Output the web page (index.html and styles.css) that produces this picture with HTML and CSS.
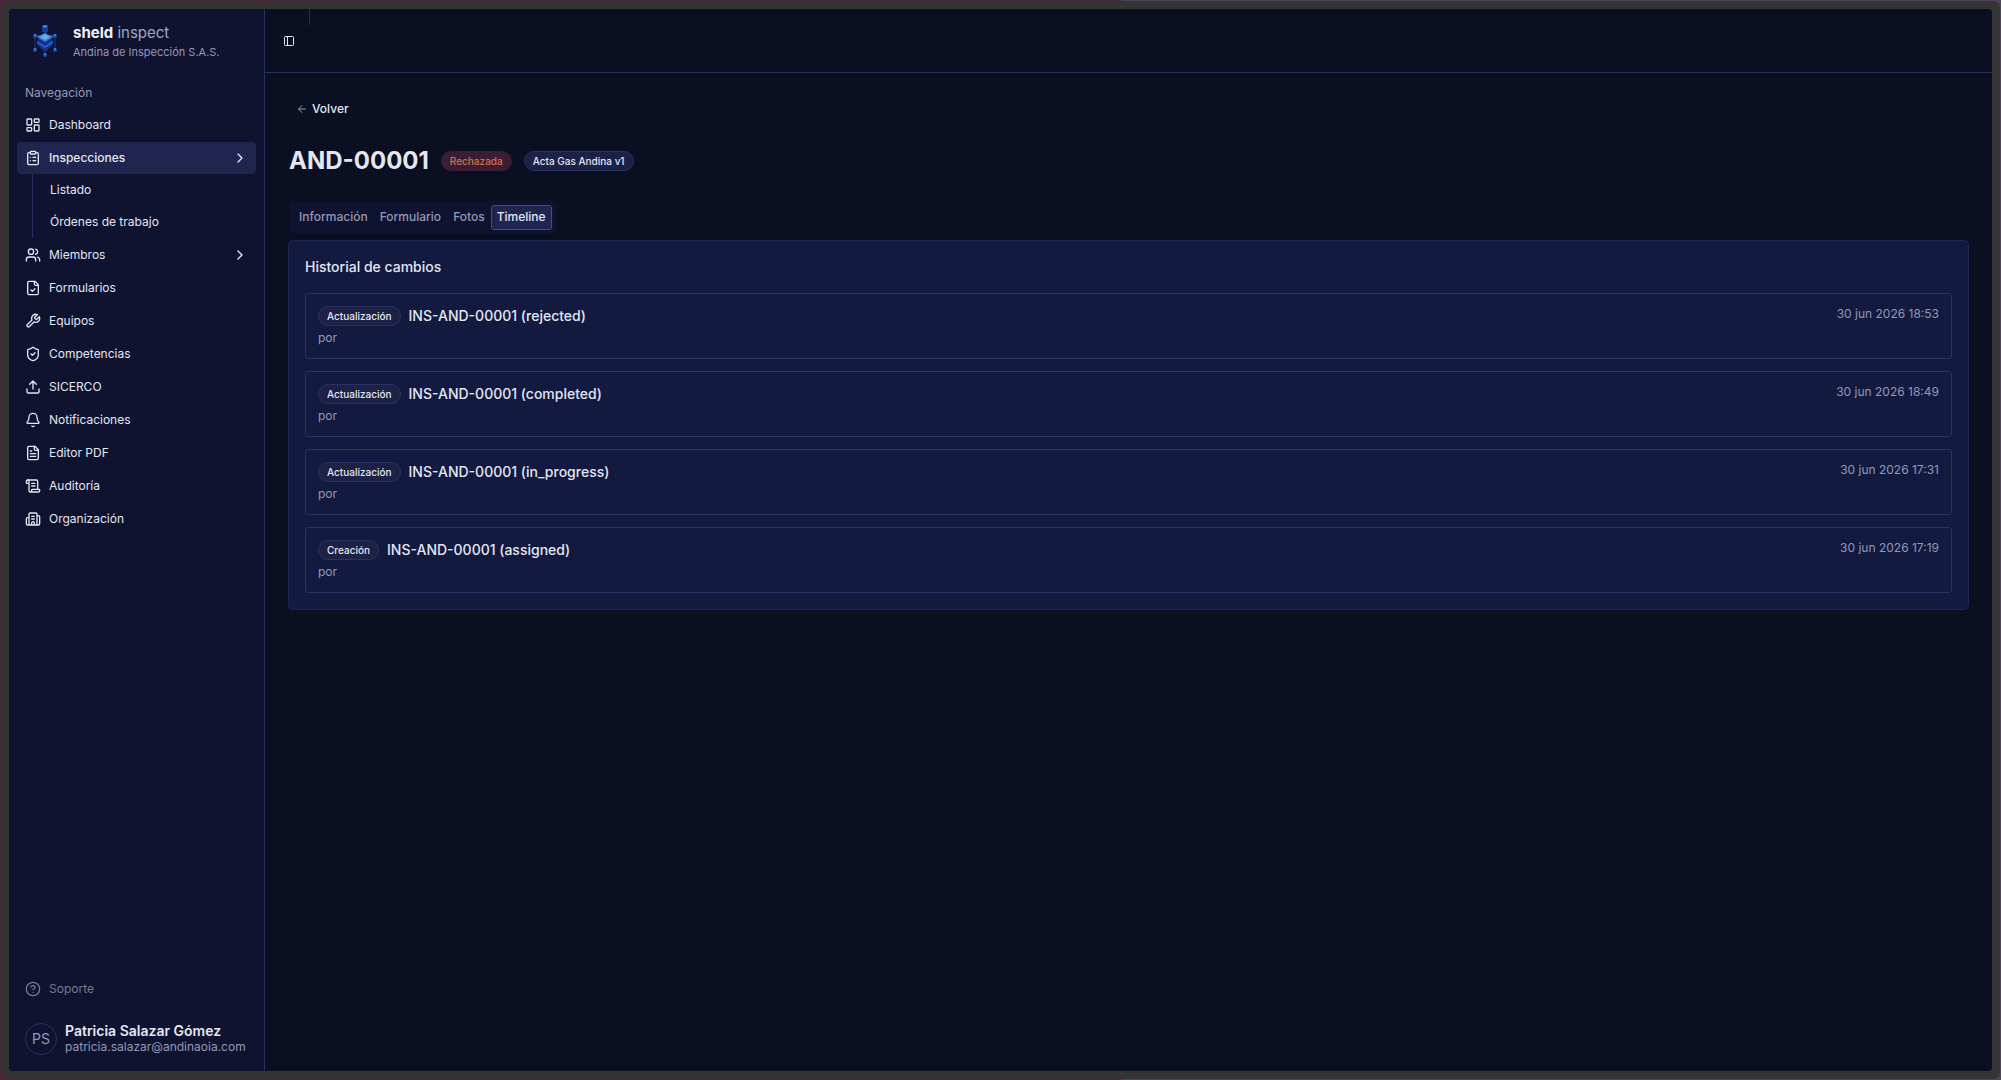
FILE: index.html
```html
<!DOCTYPE html>
<html lang="es">
<head>
  <meta charset="UTF-8" />
  <meta name="viewport" content="width=device-width, initial-scale=1.0"/>
  <title>AND-00001 - sheld inspect</title>
  <link rel="stylesheet" href="styles.css">
</head>
<body>

  <div class="frame">
    <div class="app">

      <aside class="sidebar">
        <a class="brand" href="#">
          <svg class="brand-logo" viewBox="-1 2 32 38" aria-hidden="true">
            <path d="M15 11v7M5 16v14M25 16v14M15 28v6" stroke="#1a3690" stroke-width="1"/>
            <path d="M4 15h22" stroke="#1f479f" stroke-width="2"/>
            <path d="M12 5l3-1 3 1v6l-3 1-3-1z" fill="#183a92"/>
            <path d="M12 5l3-1 3 1-3 2z" fill="#3f8fe0"/>
            <path d="M8 16l7-4 7 4 1 8-8 7-8-7z" fill="#142f8c"/>
            <path d="M7 20l8 5 8-5v2l-8 5-8-5z" fill="#2762cc"/>
            <path d="M7 16l8-4 8 4-8 5z" fill="#3a7fd0"/>
            <path d="M10 16l5-3 5 3-5 3z" fill="#62b0e6"/>
            <g fill="#1f49b0">
              <circle cx="5" cy="15" r="2"/><circle cx="25" cy="15" r="2"/>
              <circle cx="5" cy="29" r="2"/><circle cx="25" cy="29" r="2"/>
              <circle cx="15" cy="34" r="2"/>
            </g>
            <g fill="#4b8fe6">
              <circle cx="5" cy="28" r="1"/><circle cx="25" cy="28" r="1"/><circle cx="15" cy="33" r="1"/>
              <circle cx="5" cy="14" r="1"/><circle cx="25" cy="14" r="1"/>
            </g>
          </svg>
          <span class="brand-text">
            <span class="brand-name"><strong>sheld</strong> inspect</span>
            <span class="brand-org">Andina de Inspección S.A.S.</span>
          </span>
        </a>

        <nav class="nav">
          <div class="nav-label">Navegación</div>
          <ul class="nav-list">
            <li>
              <a class="nav-item" href="#">
                <svg class="icon" viewBox="0 0 24 24"><rect width="7" height="9" x="3" y="3" rx="1"/><rect width="7" height="5" x="14" y="3" rx="1"/><rect width="7" height="9" x="14" y="12" rx="1"/><rect width="7" height="5" x="3" y="16" rx="1"/></svg>
                <span>Dashboard</span>
              </a>
            </li>
            <li class="nav-group">
              <a class="nav-item active" href="#">
                <svg class="icon" viewBox="0 0 24 24"><rect width="8" height="4" x="8" y="2" rx="1"/><path d="M16 4h2a2 2 0 0 1 2 2v14a2 2 0 0 1-2 2H6a2 2 0 0 1-2-2V6a2 2 0 0 1 2-2h2M12 11h4M12 16h4M8 11h.01M8 16h.01"/></svg>
                <span>Inspecciones</span>
                <svg class="icon chevron" viewBox="0 0 24 24"><path d="m9 18 6-6-6-6"/></svg>
              </a>
              <ul class="nav-sub">
                <li><a href="#">Listado</a></li>
                <li><a href="#">Órdenes de trabajo</a></li>
              </ul>
            </li>
            <li>
              <a class="nav-item" href="#">
                <svg class="icon" viewBox="0 0 24 24"><path d="M16 21v-2a4 4 0 0 0-4-4H6a4 4 0 0 0-4 4v2"/><circle cx="9" cy="7" r="4"/><path d="M22 21v-2a4 4 0 0 0-3-3.870M16 3.130a4 4 0 0 1 0 7.750"/></svg>
                <span>Miembros</span>
                <svg class="icon chevron" viewBox="0 0 24 24"><path d="m9 18 6-6-6-6"/></svg>
              </a>
            </li>
            <li>
              <a class="nav-item" href="#">
                <svg class="icon" viewBox="0 0 24 24"><path d="M15 2H6a2 2 0 0 0-2 2v16a2 2 0 0 0 2 2h12a2 2 0 0 0 2-2V7Z"/><path d="M14 2v4a2 2 0 0 0 2 2h4M9 15l2 2 4-4"/></svg>
                <span>Formularios</span>
              </a>
            </li>
            <li>
              <a class="nav-item" href="#">
                <svg class="icon" viewBox="0 0 24 24"><path d="M14.700 6.300a1 1 0 0 0 0 1.400l1.600 1.600a1 1 0 0 0 1.400 0l3.770-3.770a6 6 0 0 1-7.940 7.940l-6.910 6.910a2.120 2.120 0 0 1-3-3l6.910-6.910a6 6 0 0 1 7.940-7.940l-3.760 3.760z"/></svg>
                <span>Equipos</span>
              </a>
            </li>
            <li>
              <a class="nav-item" href="#">
                <svg class="icon" viewBox="0 0 24 24"><path d="M20 13c0 5-3.500 7.500-7.660 8.950a1 1 0 0 1-.67-.01C7.500 20.500 4 18 4 13V6a1 1 0 0 1 1-1c2 0 4.500-1.200 6.240-2.720a1.170 1.170 0 0 1 1.520 0C14.510 3.810 17 5 19 5a1 1 0 0 1 1 1z"/><path d="m9 12 2 2 4-4"/></svg>
                <span>Competencias</span>
              </a>
            </li>
            <li>
              <a class="nav-item" href="#">
                <svg class="icon" viewBox="0 0 24 24"><path d="M21 15v4a2 2 0 0 1-2 2H5a2 2 0 0 1-2-2v-4M17 8l-5-5-5 5M12 3v12"/></svg>
                <span>SICERCO</span>
              </a>
            </li>
            <li>
              <a class="nav-item" href="#">
                <svg class="icon" viewBox="0 0 24 24"><path d="M10.268 21a2 2 0 0 0 3.464 0M3.262 15.326A1 1 0 0 0 4 17h16a1 1 0 0 0 .740-1.673C19.410 13.956 18 12.499 18 8A6 6 0 0 0 6 8c0 4.499-1.411 5.956-2.738 7.326"/></svg>
                <span>Notificaciones</span>
              </a>
            </li>
            <li>
              <a class="nav-item" href="#">
                <svg class="icon" viewBox="0 0 24 24"><path d="M15 2H6a2 2 0 0 0-2 2v16a2 2 0 0 0 2 2h12a2 2 0 0 0 2-2V7Z"/><path d="M14 2v4a2 2 0 0 0 2 2h4M10 9H8M16 13H8M16 17H8"/></svg>
                <span>Editor PDF</span>
              </a>
            </li>
            <li>
              <a class="nav-item" href="#">
                <svg class="icon" viewBox="0 0 24 24"><path d="M15 12h-5M15 8h-5M19 17V5a2 2 0 0 0-2-2H4"/><path d="M8 21h12a2 2 0 0 0 2-2v-1a1 1 0 0 0-1-1H11a1 1 0 0 0-1 1v1a2 2 0 1 1-4 0V5a2 2 0 1 0-4 0v2a1 1 0 0 0 1 1h3"/></svg>
                <span>Auditoría</span>
              </a>
            </li>
            <li>
              <a class="nav-item" href="#">
                <svg class="icon" viewBox="0 0 24 24"><path d="M10 12h4M10 8h4M14 21v-3a2 2 0 0 0-4 0v3M6 10H4a2 2 0 0 0-2 2v7a2 2 0 0 0 2 2h16a2 2 0 0 0 2-2V9a2 2 0 0 0-2-2h-2M6 21V5a2 2 0 0 1 2-2h8a2 2 0 0 1 2 2v16"/></svg>
                <span>Organización</span>
              </a>
            </li>
          </ul>
        </nav>

        <div class="sidebar-bottom">
          <a class="nav-item support" href="#">
            <svg class="icon" viewBox="0 0 24 24"><circle cx="12" cy="12" r="10"/><path d="M9.090 9a3 3 0 0 1 5.830 1c0 2-3 3-3 3M12 17h.01"/></svg>
            <span>Soporte</span>
          </a>
          <button class="user" type="button">
            <span class="avatar">PS</span>
            <span class="user-text">
              <span class="user-name">Patricia Salazar Gómez</span>
              <span class="user-email">patricia.salazar@andinaoia.com</span>
            </span>
          </button>
        </div>
      </aside>

      <div class="content">
        <header class="topbar">
          <button class="toggle" type="button" aria-label="Menú">
            <svg class="icon icon-sm" viewBox="0 0 24 24"><rect width="18" height="18" x="3" y="3" rx="2"/><path d="M9 3v18"/></svg>
          </button>
          <div class="divider"></div>
        </header>

        <main class="page">
          <a class="back" href="#">
            <svg class="icon icon-sm" viewBox="0 0 24 24"><path d="m12 19-7-7 7-7M19 12H5"/></svg>
            <span>Volver</span>
          </a>

          <div class="title-row">
            <h1>AND-00001</h1>
            <span class="badge badge-rejected">Rechazada</span>
            <span class="badge">Acta Gas Andina v1</span>
          </div>

          <div class="tabs" role="tablist">
            <button class="tab" type="button" role="tab">Información</button>
            <button class="tab" type="button" role="tab">Formulario</button>
            <button class="tab" type="button" role="tab">Fotos</button>
            <button class="tab selected" type="button" role="tab" aria-selected="true">Timeline</button>
          </div>

          <section class="card">
            <h2>Historial de cambios</h2>
            <ul class="timeline">
              <li class="entry">
                <div>
                  <div class="entry-title"><span class="badge">Actualización</span><span>INS-AND-00001 (rejected)</span></div>
                  <p class="entry-by">por</p>
                </div>
                <time class="entry-date">30 jun 2026 18:53</time>
              </li>
              <li class="entry">
                <div>
                  <div class="entry-title"><span class="badge">Actualización</span><span>INS-AND-00001 (completed)</span></div>
                  <p class="entry-by">por</p>
                </div>
                <time class="entry-date">30 jun 2026 18:49</time>
              </li>
              <li class="entry">
                <div>
                  <div class="entry-title"><span class="badge">Actualización</span><span>INS-AND-00001 (in_progress)</span></div>
                  <p class="entry-by">por</p>
                </div>
                <time class="entry-date">30 jun 2026 17:31</time>
              </li>
              <li class="entry">
                <div>
                  <div class="entry-title"><span class="badge">Creación</span><span>INS-AND-00001 (assigned)</span></div>
                  <p class="entry-by">por</p>
                </div>
                <time class="entry-date">30 jun 2026 17:19</time>
              </li>
            </ul>
          </section>
        </main>
      </div>

    </div>
  </div>

</body>
</html>
```
FILE: styles.css
```css
* {
  box-sizing: border-box;
  margin: 0;
  padding: 0;
}

body {
  font-family: Inter, "Liberation Sans", sans-serif;
  font-size: 12px;
  line-height: 16px;
  color: #e4e6f1;
  background: linear-gradient(to right, #4b2438 56%, #4a4658 56%);
}

ul {
  list-style: none;
}

a {
  color: inherit;
  text-decoration: none;
}

button {
  font: inherit;
  color: inherit;
  background: none;
  border: none;
  text-align: left;
}

.frame {
  min-height: 100vh;
  display: flex;
  padding: 8px;
  border: 1px solid transparent;
  border-radius: 8px;
  background-color: #343434;
  background-clip: padding-box;
}

.app {
  flex: 1;
  display: flex;
  border-radius: 4px;
  overflow: hidden;
  background-color: #0a0f21;
}

.icon {
  width: 16px;
  height: 16px;
  flex-shrink: 0;
  fill: none;
  stroke: currentColor;
  stroke-width: 2;
  stroke-linecap: round;
  stroke-linejoin: round;
}

.icon-sm {
  width: 12px;
  height: 12px;
}

/* sidebar */
.sidebar {
  width: 256px;
  flex-shrink: 0;
  display: flex;
  flex-direction: column;
  padding: 8px;
  background-color: #0f1330;
  border-right: 1px solid #27305f;
}

.brand {
  display: flex;
  align-items: center;
  gap: 12px;
  height: 50px;
  padding: 0 12px;
}

.brand-logo {
  width: 32px;
  height: 38px;
}

.brand-text,
.user-text {
  display: flex;
  flex-direction: column;
}

.brand-name {
  font-size: 15px;
  line-height: 20px;
  color: #a3a6c2;
}

.brand-name strong {
  font-weight: 700;
  color: #f0f2fa;
}

.brand-org {
  font-size: 11px;
  line-height: 18px;
  color: #9598b5;
}

.nav {
  padding-top: 10px;
}

.nav-label {
  height: 32px;
  padding: 0 8px;
  line-height: 32px;
  color: #9699b4;
}

.nav-list {
  display: flex;
  flex-direction: column;
  gap: 1px;
}

.nav-item {
  display: flex;
  align-items: center;
  gap: 8px;
  height: 32px;
  padding: 0 8px;
  border-radius: 4px;
}

.nav-item.active {
  font-weight: 500;
  background-color: #20254f;
}

.chevron {
  margin-left: auto;
}

.nav-sub {
  margin-left: 15px;
  padding-left: 17px;
  border-left: 1px solid #27305f;
}

.nav-sub a {
  display: block;
  line-height: 32px;
}

.sidebar-bottom {
  margin-top: auto;
}

.support {
  color: #76798f;
}

.user {
  display: flex;
  align-items: center;
  gap: 8px;
  width: 100%;
  margin-top: 10px;
  padding: 8px;
}

.avatar {
  width: 32px;
  height: 32px;
  border: 1px solid #27305f;
  border-radius: 50%;
  font-size: 14px;
  line-height: 30px;
  text-align: center;
  color: #9598b5;
}

.user-name {
  font-size: 14px;
  font-weight: 600;
  line-height: 16px;
}

.user-email {
  color: #9598b5;
}

/* content */
.content {
  flex: 1;
}

.topbar {
  display: flex;
  height: 64px;
  padding: 0 12px;
  border-bottom: 1px solid #27305f;
}

.toggle {
  display: flex;
  align-items: center;
  justify-content: center;
  width: 24px;
  height: 64px;
}

.divider {
  width: 1px;
  height: 16px;
  margin-left: 8px;
  background-color: #27305f;
}

.page {
  display: flex;
  flex-direction: column;
  align-items: flex-start;
  padding: 24px;
}

.back {
  display: flex;
  align-items: center;
  gap: 4px;
  height: 24px;
  padding: 0 7px;
  font-weight: 500;
}

.back .icon {
  color: #9598b5;
}

.title-row {
  display: flex;
  align-items: center;
  gap: 12px;
  margin-top: 24px;
}

h1 {
  font-size: 24px;
  font-weight: 700;
  line-height: 32px;
}

.badge {
  height: 20px;
  padding: 0 8px;
  border: 1px solid #2a3163;
  border-radius: 10px;
  font-size: 10px;
  font-weight: 500;
  line-height: 18px;
  background-color: #1c2145;
}

.badge-rejected {
  color: #d0704f;
  border-color: #3b1e33;
  background-color: #3b1e33;
}

.tabs {
  display: flex;
  align-items: center;
  height: 32px;
  margin-top: 24px;
  padding: 4px;
  border-radius: 4px;
  background-color: #0f1330;
}

.tab {
  height: 25px;
  padding: 0 5px;
  border: 1px solid transparent;
  border-radius: 3px;
  font-weight: 500;
  color: #9598b5;
}

.tab.selected {
  color: #e4e6f1;
  border-color: #454c80;
  background-color: #1f2450;
}

.card {
  align-self: stretch;
  margin-top: 8px;
  padding: 16px;
  border-radius: 4px;
  background-color: #131a40;
  box-shadow: 0 0 0 1px #22264a;
}

h2 {
  font-size: 14px;
  font-weight: 500;
  line-height: 20px;
}

.timeline {
  display: flex;
  flex-direction: column;
  gap: 12px;
  margin-top: 16px;
}

.entry {
  display: flex;
  justify-content: space-between;
  min-height: 66px;
  padding: 12px;
  border: 1px solid #2a3163;
  border-radius: 3px;
}

.entry-title {
  display: flex;
  align-items: center;
  gap: 8px;
  font-size: 14px;
  font-weight: 500;
  line-height: 20px;
}

.entry-by {
  margin-top: 4px;
  color: #9598b5;
}

.entry-date {
  color: #9598b5;
}
```
